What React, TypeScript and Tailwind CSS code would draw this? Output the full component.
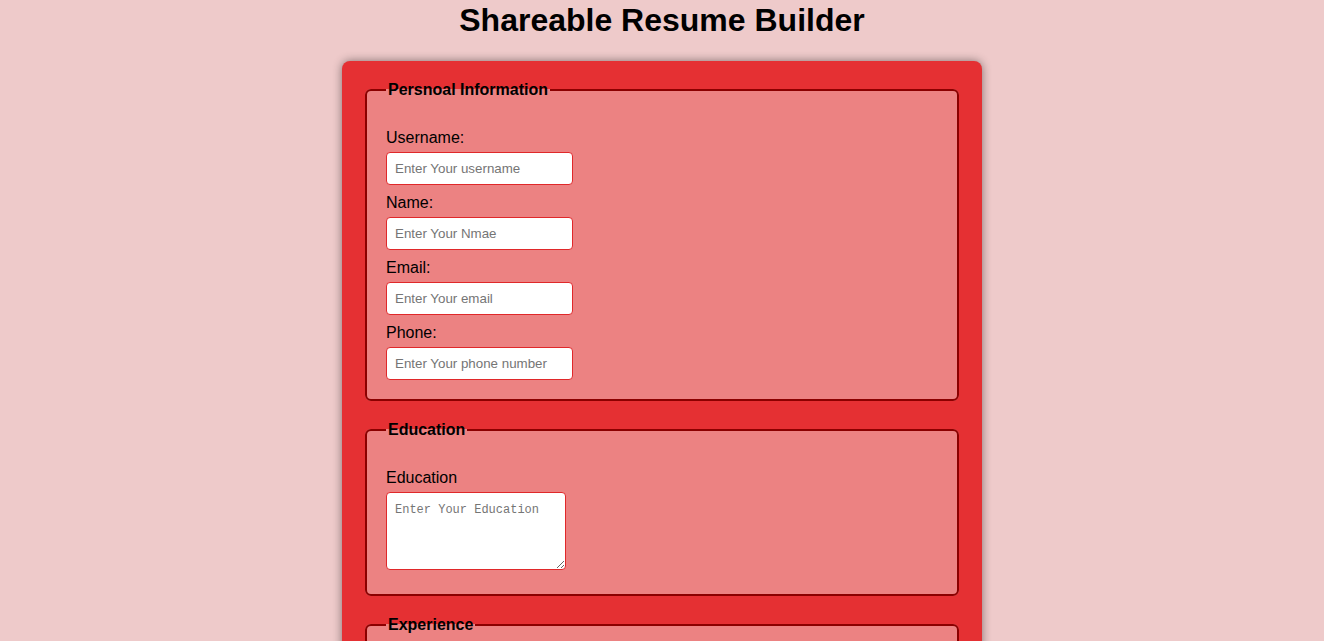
import React from "react";

function Field({ label, placeholder }: { label: string; placeholder: string }) {
  return (
    <div>
      <label className="block text-[16px] leading-[18px] mb-[5px] text-black">{label}</label>
      <input
        type="text"
        placeholder={placeholder}
        className="block w-[187px] h-[33px] mb-[9px] px-[8px] bg-white border border-[#e0282a] rounded-[4px] text-[13.33px] placeholder:text-[#757575] outline-none"
      />
    </div>
  );
}

function Area({ label, placeholder }: { label: string; placeholder: string }) {
  return (
    <div>
      <label className="block text-[16px] leading-[18px] mb-[5px] text-black">{label}</label>
      <textarea
        placeholder={placeholder}
        className="block w-[180px] h-[78px] mb-[14px] px-[8px] pt-[10px] pb-[8px] bg-white border border-[#e0282a] rounded-[4px] text-[12px] leading-[15px] placeholder:text-[#757575] outline-none"
        style={{ fontFamily: '"Liberation Mono", monospace', resize: "both" }}
      />
    </div>
  );
}

function Section({ title, children }: { title: string; children: React.ReactNode }) {
  return (
    <fieldset className="border-2 border-[#8b0000] rounded-[6px] bg-[#ec8282] px-[19px] pt-[30px] pb-[10px] mb-[20px]">
      <legend className="px-[2px] text-[16px] leading-[18px] font-bold text-black">{title}</legend>
      {children}
    </fieldset>
  );
}

export default function App() {
  return (
    <div
      className="min-h-screen bg-[#eecaca] pb-10"
      style={{ fontFamily: '"Liberation Sans", Arial, sans-serif' }}
    >
      <h1 className="text-center text-[32px] leading-[37px] font-bold text-black pt-[2px] mb-[22px]">
        Shareable Resume Builder
      </h1>
      <form className="w-[640px] mx-auto bg-[#e53033] rounded-[8px] pt-[20px] px-[23px] pb-[20px] shadow-[0_0_10px_rgba(0,0,0,0.45)]">
        <Section title="Persnoal Information">
          <Field label="Username:" placeholder="Enter Your username" />
          <Field label="Name:" placeholder="Enter Your Nmae" />
          <Field label="Email:" placeholder="Enter Your email" />
          <Field label="Phone:" placeholder="Enter Your phone number" />
        </Section>
        <Section title="Education">
          <Area label="Education" placeholder="Enter Your Education" />
        </Section>
        <Section title="Experience">
          <Area label="Experience" placeholder="Enter Your Experience" />
        </Section>
        <Section title="Skills">
          <Area label="Skills" placeholder="Enter Your Skills" />
        </Section>
      </form>
    </div>
  );
}
